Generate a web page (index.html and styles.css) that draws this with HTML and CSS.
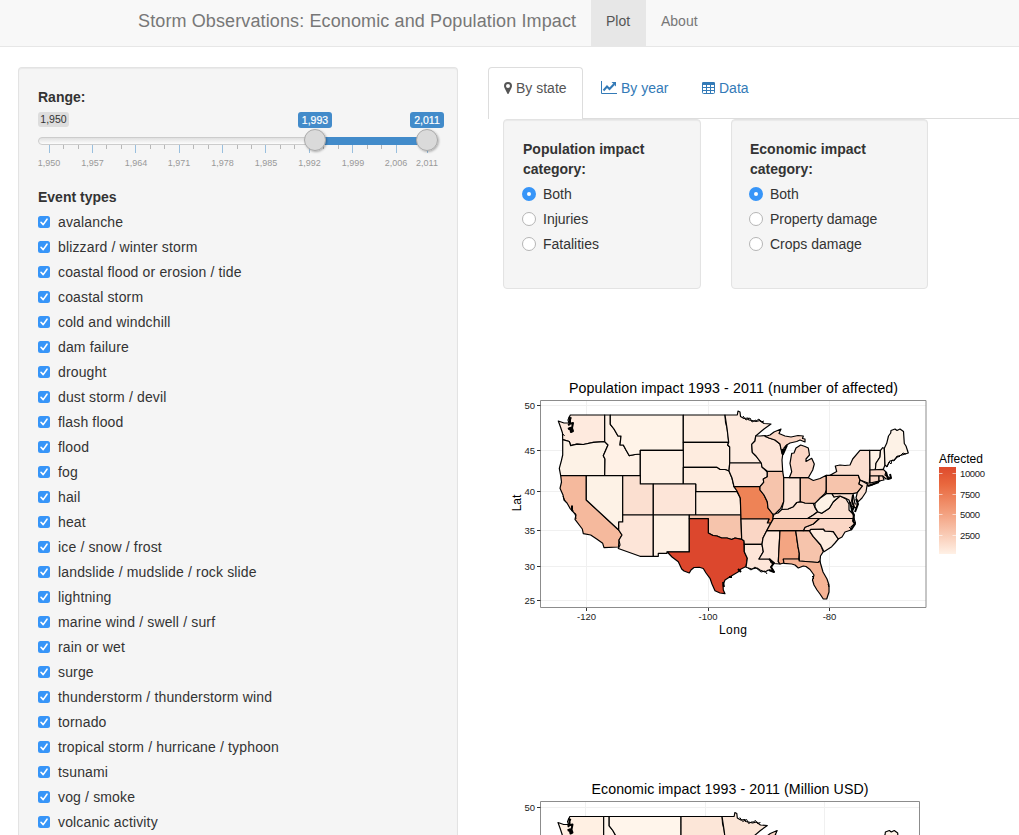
FILE: index.html
```html
<!DOCTYPE html>
<html lang="en">
<head>
<meta charset="utf-8">
<title>Storm Observations: Economic and Population Impact</title>
<link rel="stylesheet" href="styles.css">
</head>
<body>
<nav class="navbar">
  <span class="brand">Storm Observations: Economic and Population Impact</span>
  <a class="nav-link active">Plot</a>
  <a class="nav-link">About</a>
</nav>

<svg class="sprite" width="0" height="0" aria-hidden="true">
  <symbol id="check" viewBox="0 0 12 12"><rect width="12" height="12" rx="2.5" fill="#3795f8"/><path d="M3 6.3 5.2 8.6 9 3.2" fill="none" stroke="#fff" stroke-width="1.6" stroke-linecap="round" stroke-linejoin="round"/></symbol>
</svg>

<div class="page">
  <aside class="sidebar well">
    <div class="label">Range:</div>
    <svg class="slider" viewBox="38 107 406 65" width="406" height="65">
      <defs>
        <linearGradient id="track" x2="0" y2="1"><stop offset="0" stop-color="#dedede"/><stop offset="1" stop-color="#fff"/></linearGradient>
        <filter id="knob" x="-30%" y="-30%" width="160%" height="160%"><feDropShadow dx="1" dy="1" stdDeviation="1" flood-opacity=".3"/></filter>
      </defs>
      <rect x="38" y="112" width="31" height="15" rx="3" fill="#ddd"/>
      <text x="53.5" y="123" class="s-min">1,950</text>
      <rect x="38.5" y="137.500" width="394" height="7" rx="3.500" fill="url(#track)" stroke="#ccc"/>
      <path d="M63.500 145v4M78.500 145v4M106.500 145v4M121.500 145v4M150.500 145v4M164.500 145v4M193.500 145v4M208.500 145v4M237.500 145v4M251.500 145v4M280.500 145v4M294.500 145v4M323.500 145v4M338.500 145v4M367.500 145v4M381.500 145v4" stroke="#b8b8b8"/>
      <path d="M49.500 145v8M92.500 145v8M135.500 145v8M179.500 145v8M222.500 145v8M265.500 145v8M309.500 145v8M352.500 145v8M396.500 145v8M427.500 145v8" stroke="#99bfde"/>
      <rect x="315" y="137" width="112" height="8" fill="#428bca"/>
      <g fill="#dadada" stroke="#aaa" filter="url(#knob)"><circle cx="315" cy="140" r="10.500"/><circle cx="427" cy="140" r="10.500"/></g>
      <rect x="298" y="112" width="34" height="16" rx="3" fill="#428bca"/>
      <rect x="410" y="112" width="34" height="16" rx="3" fill="#428bca"/>
      <g class="s-val"><text x="315" y="124">1,993</text><text x="427" y="124">2,011</text></g>
      <g class="s-tick"><text x="49" y="166">1,950</text><text x="92.500" y="166">1,957</text><text x="136" y="166">1,964</text><text x="179" y="166">1,971</text><text x="222.500" y="166">1,978</text><text x="266" y="166">1,985</text><text x="309.500" y="166">1,992</text><text x="353" y="166">1,999</text><text x="396" y="166">2,006</text><text x="427" y="166">2,011</text></g>
    </svg>
    <div class="label events">Event types</div>
    <ul class="checks">
      <li><svg><use href="#check"/></svg>avalanche</li>
      <li><svg><use href="#check"/></svg>blizzard / winter storm</li>
      <li><svg><use href="#check"/></svg>coastal flood or erosion / tide</li>
      <li><svg><use href="#check"/></svg>coastal storm</li>
      <li><svg><use href="#check"/></svg>cold and windchill</li>
      <li><svg><use href="#check"/></svg>dam failure</li>
      <li><svg><use href="#check"/></svg>drought</li>
      <li><svg><use href="#check"/></svg>dust storm / devil</li>
      <li><svg><use href="#check"/></svg>flash flood</li>
      <li><svg><use href="#check"/></svg>flood</li>
      <li><svg><use href="#check"/></svg>fog</li>
      <li><svg><use href="#check"/></svg>hail</li>
      <li><svg><use href="#check"/></svg>heat</li>
      <li><svg><use href="#check"/></svg>ice / snow / frost</li>
      <li><svg><use href="#check"/></svg>landslide / mudslide / rock slide</li>
      <li><svg><use href="#check"/></svg>lightning</li>
      <li><svg><use href="#check"/></svg>marine wind / swell / surf</li>
      <li><svg><use href="#check"/></svg>rain or wet</li>
      <li><svg><use href="#check"/></svg>surge</li>
      <li><svg><use href="#check"/></svg>thunderstorm / thunderstorm wind</li>
      <li><svg><use href="#check"/></svg>tornado</li>
      <li><svg><use href="#check"/></svg>tropical storm / hurricane / typhoon</li>
      <li><svg><use href="#check"/></svg>tsunami</li>
      <li><svg><use href="#check"/></svg>vog / smoke</li>
      <li><svg><use href="#check"/></svg>volcanic activity</li>
    </ul>
  </aside>

  <main class="main">
    <div class="tabs">
      <a class="tab active"><svg width="8" height="12" viewBox="0 0 8 12"><path fill="#555" fill-rule="evenodd" d="M4 0a4 4 0 0 1 4 4c0 1-.4 1.800-.8 2.600L4.700 11.500q-.7 1-1.400 0L.8 6.600C.4 5.800 0 5 0 4a4 4 0 0 1 4-4Zm0 2a2 2 0 1 0 0 4 2 2 0 0 0 0-4Z"/></svg>By state</a>
      <a class="tab year"><svg width="16" height="13" viewBox="0 0 16 13"><path d="M.5 0v12.500H16" fill="none" stroke="#337ab7"/><path d="m2.500 9.500 3.500-4 2.500 2.500 4.500-4.800" fill="none" stroke="#337ab7" stroke-width="2"/><path d="M10.500 1H15v4.500Z" fill="#337ab7"/></svg>By year</a>
      <a class="tab data"><svg width="13" height="12" viewBox="0 0 13 12"><path fill="none" stroke="#337ab7" d="M.5 1.500v9q0 1 1 1h10q1 0 1-1v-9M0 5.500h13M0 8.500h13M4.500 2v10M8.500 2v10"/><path fill="#337ab7" d="M1.200 0h10.600Q13 0 13 1.200V3H0V1.200Q0 0 1.200 0Z"/></svg>Data</a>
    </div>
    <div class="filters">
      <div class="well filter">
        <div class="label">Population impact category:</div>
        <div class="radio on"><i></i>Both</div>
        <div class="radio"><i></i>Injuries</div>
        <div class="radio"><i></i>Fatalities</div>
      </div>
      <div class="well filter econ">
        <div class="label">Economic impact category:</div>
        <div class="radio on"><i></i>Both</div>
        <div class="radio"><i></i>Property damage</div>
        <div class="radio"><i></i>Crops damage</div>
      </div>
    </div>

    <svg class="chart" viewBox="488 370 531 280" width="531" height="280">
      <defs>
        <linearGradient id="legend" x2="0" y2="1"><stop offset="0" stop-color="#de4a2c"/><stop offset=".2" stop-color="#e9683e"/><stop offset=".5" stop-color="#f29b78"/><stop offset="1" stop-color="#fff1e6"/></linearGradient>
      </defs>
      <g stroke="#f0f0f0"><path d="M541 405.500H926M541 450.500H926M541 491.500H926M541 530.500H926M541 566.500H926M541 600.500H926M586.500 401V607M708.500 401V607M829.500 401V607"/></g>
      <g id="states" class="map">
        <path class="wa" d="M558.300 421 564 423 569 423 568 420 570.300 415H604.700V441.700L593.300 442.300 583.300 444.500 577 444.200 570.700 445.700 569.300 441.500 566 440.500 562.700 439.700 562.500 433 560.500 427Z"/>
        <path class="or" d="M562.700 439.700 569.300 441.500 570.700 445.700 577 444.200 583.300 444.500 593.300 442.300 604.700 441.700 608 445 603.300 455.700 605 459 604.700 475.700H560.700L559.300 468.300 561.300 461 562.700 455Z"/>
        <path class="id" d="M604.700 415H610.300V424.300L614 429 616 432.500 618 436 621 436 620 445 623.300 445 626 450 629.300 455.700 635 454.500 640.300 454V475.700H604.700L605 459 603.300 455.700 608 445 604.700 441.700Z"/>
        <path class="mt" d="M610.300 415H683.300V450.300H640.300V454L635 454.500 629.300 455.700 626 450 623.300 445 620 445 621 436 618 436 616 432.500 614 429 610.300 424.300Z"/>
        <path class="nd" d="M683.300 415H725L725.500 422 727 428 728 435 728.700 442.300H683.300Z"/>
        <path class="sd" d="M683.300 442.300H728.700L727.700 445 729.700 447V463L729 471 725 469.500 720 469.500 716.700 467.300H683.300Z"/>
        <path class="mn" d="M725 415H737.300L738 411 740 412 740.500 416.500 744 418.500 748 418 749 420 752 420.500 756 421.500 760 420.500 764 423.500 771 424 764 429 755.700 436 755 441 751.700 444.300 752.300 452.300 756 456 761.300 463H729.700V447L727.700 445 728.700 442.300 727 428Z"/>
        <path class="wy" d="M640.300 450.300H683.300V484H640.300Z"/>
        <path class="ne" d="M683.300 467.300H716.700L720 469.500 725 469.500 729 471 732 478 734 486.700 738.300 491.700H695.700V484H683.300Z"/>
        <path class="ia" d="M729.700 463H761.300L762 467 767.300 472 767.300 476.700 763.300 479 763.700 482.300 760 486.700H734L732 478 729 471Z"/>
        <path class="ca" d="M560.700 475.700H586.300V500L618.700 530 622 535 619 540 618.500 547 604 547.700 602.700 543.300 596.700 539 590.700 535 583.300 533.700 582.300 529 575 519.300 576 515 570 508.300 567 503 564 500 563 495 560 488.300 561.500 482Z"/>
        <path class="nv" d="M586.300 475.700H622.700V522H618.700V530L586.300 500Z"/>
        <path class="ut" d="M622.700 475.700H640.300V484H653.300V515H622.700Z"/>
        <path class="co" d="M653.300 484H695.700V515H653.300Z"/>
        <path class="ks" d="M695.700 491.700H737L740.300 498 741 515H695.700Z"/>
        <path class="az" d="M622.700 515H653.300V556.300H640L618.300 548.500 620 545 619 540 622 535 618.700 530V522H622.700Z"/>
        <path class="nm" d="M653.300 515H689.300V551.800H667V553.300H658.300V556.300H653.300Z"/>
        <path class="ok" d="M689.300 515H741V519L741.700 539.300 735 538 731.700 539.500 727 538 721.700 538 717 536 713 535.500 708.300 533V518.700H689.300Z"/>
        <path class="tx" d="M689.300 518.700H708.300V533L713 535.500 717 536 721.700 538 727 538 731.700 539.500 735 538 741.700 539.300 744 540.700 744.300 551.700 747.300 558.300 746 566.500 741 569 738 572 730 576.700 725 580 723 585 723.300 590 725 593.700 720 593 715 590.700 712 584 710 578.300 706 573 703.300 568.500 699.300 567.300 694 567.500 691 570 689.300 573 684 571 681.700 569 678.300 561.700 672 557 667.300 552H689.300Z"/>
        <path class="mo" d="M734 486.700H760V490L764 495 767.300 501.700 768 508 772.700 514 773.500 518.500 770.700 523.500H767.300L769 519H741L740.300 498 737 491Z"/>
        <path class="ar" d="M741 519H769L767.300 523H770.700L766.700 530.700 763 538 762 544.300H744.300L744 540.700 741.700 539.300Z"/>
        <path class="la" d="M744.300 544.300H762L763.300 551.700 759 559H770L770.700 562 773 564 771 567 774 571.700 768.300 570 765 572 760 570 757 568 751.700 569 746 567.300 747.300 558.300 744.300 551.700Z"/>
        <path class="ms" d="M766.700 530.700H780L778.300 561.700 780 564 773.300 563.500 770 559H759L763.300 551.700 762 544.300 763 538Z"/>
        <path class="al" d="M780 530.700H795.700L798 546.700 799.300 553.300 798.700 559.300H783.300L784 563 780 564 778.300 561.700Z"/>
        <path class="ga" d="M795.700 530.700H809.300L813.300 536.700 820.700 545 823.300 551.700 820.500 556 820 561 818 562.500 799.300 561 799.300 553.300 798 546.700Z"/>
        <path class="fl" d="M783.300 559H798.700L799.300 561 818 562.500 820 561 820.700 564 823 572 827 579 829 585 829 592 826.700 599 823.300 599 820 594 817 590 814 585 812.500 580 814 575 810 569.500 806 566.500 803.300 566 798.300 568 795 565 791.700 564 784 563.300Z"/>
        <path class="sc" d="M809.300 530.700 811 529.300 823.300 529 825 531 833.300 531.700 838.300 539 835 543 831.700 546.700 824 551.700 820.700 545 813.300 536.700Z"/>
        <path class="nc" d="M803.300 530.700 805 527.300 813.300 524 819.300 518.500H854L855.500 523 851 527 851 530 845 532 842 537 838.300 539 833.300 531.700 825 531 823.300 529 811 529.300 809.300 530.700Z"/>
        <path class="tn" d="M773.500 518.500H819.300L813.300 524 805 527.300 803.300 530.700H766.700L770.700 523.500Z"/>
        <path class="ky" d="M772.700 518.500 774 514 778 513 781.700 509.500 788 509 793.300 506.700 796.700 502.500 801.700 501.700 805 503 813.300 503.500 815.300 508.300 817.700 511.700 813.300 515 807.700 518.500Z"/>
        <path class="il" d="M767.300 471.300H782.700L783.700 477.700V501.700L780.700 508.300 775 514H772.700L768 508 767.300 501.700 764 495 760 490 760 486.700 763.700 482.300 763.300 479 767.300 476.700Z"/>
        <path class="in" d="M783.700 477.700H800.300V501.700L796.700 502.500 793.300 506.700 788 509 781.700 509.500 783.700 501.700Z"/>
        <path class="oh" d="M800.300 477.700H808.300L813.300 480.500 820 478.500 826.300 475.300V490L825 493.500 820 498.300 815 503.300 805 503 800.300 501.700Z"/>
        <path class="wi" d="M755.700 436 760 436 765 435.500 769 438 775 440 780 444 781 449 783.300 450 782 460 782.700 471.300H767.300L762 467 761.300 463 756 456 752.300 452.300 751.700 444.300 755 441Z"/>
        <path class="mi" d="M765 436.500 770 435 774 432 781 429 779 433.500 785 436 791 437 798 435.500 803.300 436 802.500 438.500 805 439 805 442 800 440 796.700 441.500 790 443 786.700 445 784 448 782 454 781 449 780 444 775 440 769 438Z"/>
        <path class="mi" d="M800.700 445 805 446.500 808.300 448 809.500 455 806 459 806 461.500 811.700 458.300 814.300 464 812.700 470 808.300 477.700H789.300L791.700 471.700 790 463.300 791.700 453.300 794 453 796 448Z"/>
        <path class="pa" d="M826.300 475.300 830 475.300H858.300L860 480 859 484 862.500 486 857.300 492.700 853 493.700H826.300Z"/>
        <path class="ny" d="M830 475.300 836.700 471.500 835.300 466 840 465 845 465.500 850 465 852.700 459 860 450.300H869.700L870 470 869.300 483 876 481.500 880 481 872 485 867.300 486 868 483 860 480 858.300 475.300Z"/>
        <path class="vt" d="M869.700 450.300H880.500L880 457 876 463.300 875.300 470H870Z"/>
        <path class="nh" d="M880.500 450.300 882.700 447.700 884.300 448.300 885 465 883.300 469.300 875.300 470 876 463.300 880 457Z"/>
        <path class="me" d="M884.300 448.300 886.700 443.300 888.500 436 890.700 433 891 430.500 895 429 897 430.500 900 429 903.500 431.500 904.300 443.500 906 446 908.300 453 902 455 898.300 456 894 460 890 461 886.700 466.700 885 465Z"/>
        <path class="ma" d="M870 470 883.300 469.300 886 472 885 475 890.700 478.500 886 479 882.700 476H870Z"/>
        <path class="ct" d="M870 476H879V481L870 483Z"/>
        <path class="ct" d="M879 476H882.700L884 480 879 481Z"/>
        <path class="nj" d="M860 480 867.300 484 866 492 862 498 858.300 501.700 856 498 857.300 492.700 862.500 486 859 484Z"/>
        <path class="va" d="M807.700 518.500 813.300 515 817.700 511.700 821.700 513.300 829.300 508.300 833.300 501.700 840 496 846 499 849 504 849 510 853 514 854 518.500Z"/>
        <path class="wv" d="M826.300 493.700H832L834 497 839 494.500 840 496 833.300 501.700 829.300 508.300 821.700 513.300 817.700 511.700 815 507 815 503.300 820 498.300Z"/>
        <path class="md" d="M832 493.700H853L855 504 858 504 856 508 851 506 849 500 845 498 840 496 834 497Z"/>
        <g fill="none">
          <path stroke-width="2" d="M568.500 417.500l3 1M570 419v5l-2 1M569 424l4-1-1 5 1 3-2 1-1-4-2 1M570 427l1 4M572 505.500v4.500l1 1M782 449l1 5 4-9M853 495l-1 6 2 6-2 4 2 4-1 6 2 3-4 6M850 502l2 8M856 499l2 5-3 8M769 559l5 4-3 4 3 5-5-2M886 472l2 7 3-1-1-4M868 486l11-4M738 569l3 3M729 577l3 0M723 582l1 5"/>
          <path stroke-width="1" d="M563 434l1.500 2M563 496l2 5M575 513l1 6M743 416l3 4 4-2 2 4 4-2M756 421l3-2 2 3 3-1M748 568l3 2 4-3 6 5 4-1 2 3M851 529l-2-2M829 587l-1-3M812 576l2 2-2 2M887 467l2-5 2 2 1-4 2 1 3-5 2 1 4-4 3 1"/>
        </g>
      </g>
      <path class="frame" d="M540.500 400.500H926V607.500H540.500Z"/>
      <path stroke="#333" d="M537 405.500h3.500M537 450.500h3.500M537 491.500h3.500M537 530.500h3.500M537 566.500h3.500M537 600.500h3.500M586.500 608v3M708.500 608v3M829.500 608v3"/>
      <g class="axis end"><text x="535" y="409">50</text><text x="535" y="454">45</text><text x="535" y="495">40</text><text x="535" y="534">35</text><text x="535" y="570">30</text><text x="535" y="604">25</text></g>
      <g class="axis mid"><text x="586.500" y="620">-120</text><text x="708" y="620">-100</text><text x="829.500" y="620">-80</text></g>
      <text class="title" x="733.500" y="393" textLength="329">Population impact 1993 - 2011 (number of affected)</text>
      <text class="name mid" x="733" y="634" textLength="28">Long</text>
      <text class="name mid" transform="translate(520.500 503) rotate(-90)">Lat</text>
      <text class="name" x="939" y="463" textLength="44">Affected</text>
      <rect x="939" y="467" width="17" height="87" fill="url(#legend)"/>
      <path stroke="#fff" stroke-opacity=".6" d="M939 473.500h3.500M952.500 473.500h3.500M939 494.500h3.500M952.500 494.500h3.500M939 514.500h3.500M952.500 514.500h3.500M939 535.500h3.500M952.500 535.500h3.500"/>
      <g class="axis"><text x="960" y="477" textLength="25">10000</text><text x="960" y="498" textLength="20">7500</text><text x="960" y="518" textLength="20">5000</text><text x="960" y="539" textLength="20">2500</text></g>
    </svg>

    <svg class="chart second" viewBox="488 775 531 60" width="531" height="60">
      <path stroke="#f0f0f0" d="M541 807.500H920M585.500 802V835M705.500 802V835M824.500 802V835"/>
      <use href="#states" class="damage" transform="translate(8.650 401.500) scale(.984 1)"/>
      <path class="frame" d="M540.500 836V801.500H919.500V836"/>
      <path stroke="#333" d="M537 807.500h3.500"/>
      <g class="axis end"><text x="535" y="811">50</text></g>
      <text class="title" x="730" y="794" textLength="277">Economic impact 1993 - 2011 (Million USD)</text>
    </svg>
  </main>
</div>
</body>
</html>
```
FILE: styles.css
```css
* { box-sizing: border-box; }
body {
  margin: 0;
  height: 835px;
  overflow: hidden;
  background: #fff;
  color: #333;
  font: 14px/20px "Liberation Sans", Arial, sans-serif;
}
svg { display: block; flex: none; }
.sprite { position: absolute; }

.navbar {
  display: flex;
  height: 47px;
  padding-left: 138px;
  background: #f8f8f8;
  border-bottom: 1px solid #e7e7e7;
  color: #777;
  line-height: 42px;
}
.brand { width: 453px; font-size: 18px; letter-spacing: .12px; white-space: nowrap; }
.nav-link { padding: 0 15px; }
.nav-link.active { width: 55px; background: #e7e7e7; color: #555; }

.page { display: flex; gap: 30px; height: 788px; padding: 20px 0 0 18px; }
.well {
  background: #f5f5f5;
  border: 1px solid #e3e3e3;
  border-radius: 4px;
  box-shadow: inset 0 1px 1px rgba(0, 0, 0, .05);
}
.label { font-weight: bold; }
.sidebar {
  flex: none;
  width: 440px;
  height: 768px;
  padding: 19px 0 0 19px;
  border-bottom: 0;
  border-radius: 4px 4px 0 0;
  overflow: hidden;
}
.slider { overflow: visible; }
.slider text { text-anchor: middle; font-size: 10.500px; }
.slider .s-min { fill: #333; }
.s-val { fill: #fff; stroke: #fff; stroke-width: .2; }
.slider .s-tick text { fill: #999; font-size: 9px; }
.events { margin-top: 15px; }
.checks { list-style: none; margin: 5px 0 0; padding: 0; letter-spacing: .15px; }
.checks li { display: flex; align-items: center; gap: 8px; height: 20px; }
.checks li + li { margin-top: 5px; }
.checks svg { width: 12px; height: 12px; }

.main { flex: none; width: 531px; }
.tabs { display: flex; height: 52px; border-bottom: 1px solid #ddd; }
.tab {
  display: flex;
  align-items: center;
  gap: 4px;
  height: 41px;
  padding: 0 15px;
  color: #337ab7;
}
.tab.active {
  width: 95px;
  height: 52px;
  padding-bottom: 12px;
  background: #fff;
  border: 1px solid #ddd;
  border-bottom: 0;
  border-radius: 4px 4px 0 0;
  color: #555;
}
.tab.year { width: 101px; padding-left: 18px; }
.tab.data { padding-left: 18px; }
.filters { display: flex; gap: 30px; margin-left: 15px; }
.filter { width: 198px; height: 170px; padding: 19px; }
.filter.econ { width: 197px; padding-left: 18px; }
.filter .label { width: 150px; margin-bottom: 5px; }
.radio { display: flex; align-items: center; gap: 7px; height: 20px; margin: 0 0 5px -1px; }
.radio i { width: 14px; height: 14px; border: 1px solid #b5b5b5; border-radius: 50%; background: #fff; }
.radio.on i { border: 5px solid #3795f8; }

.chart { margin-top: 81px; }
.chart.second { margin-top: 125px; }
.map { stroke: #000; stroke-width: 1.200; stroke-linejoin: round; }
.frame { fill: none; stroke: #8c8c8c; }
.axis { fill: #222; font-size: 9.500px; }
.end { text-anchor: end; }
.mid, .title { text-anchor: middle; }
.title { font-size: 14.200px; fill: #000; }
.name { font-size: 12px; fill: #000; }

.damage { --wa: #fff0e3; --mt: #fff5eb; --nd: #fce6d8; --mn: #fce6d8; --id: #fff5eb; }
.wa { fill: var(--wa, #feeade); }
.mt { fill: var(--mt, #fff3e8); }
.id { fill: var(--id, #fff1e6); }
.nd { fill: var(--nd, #feeee2); }
.mn { fill: var(--mn, #feebdf); }
.or, .nv, .me, .vt, .nh, .wv { fill: #fdf2e6; }
.wy, .nm { fill: #fef0e4; }
.sd, .ne, .ks, .sc { fill: #feecdf; }
.ia, .wi, .la, .ms, .in, .az, .co { fill: #fde5d8; }
.ut, .ny, .va, .ky, .nj, .md { fill: #fbdfd0; }
.ar, .nc, .ma, .ct, .mi { fill: #fad6c5; }
.ok, .ga, .tn, .il, .oh, .pa { fill: #f6c4ac; }
.ca { fill: #f5b99d; }
.fl { fill: #f5b496; }
.al { fill: #f4a582; }
.mo { fill: #ee8356; }
.tx { fill: #dc472d; }
```
